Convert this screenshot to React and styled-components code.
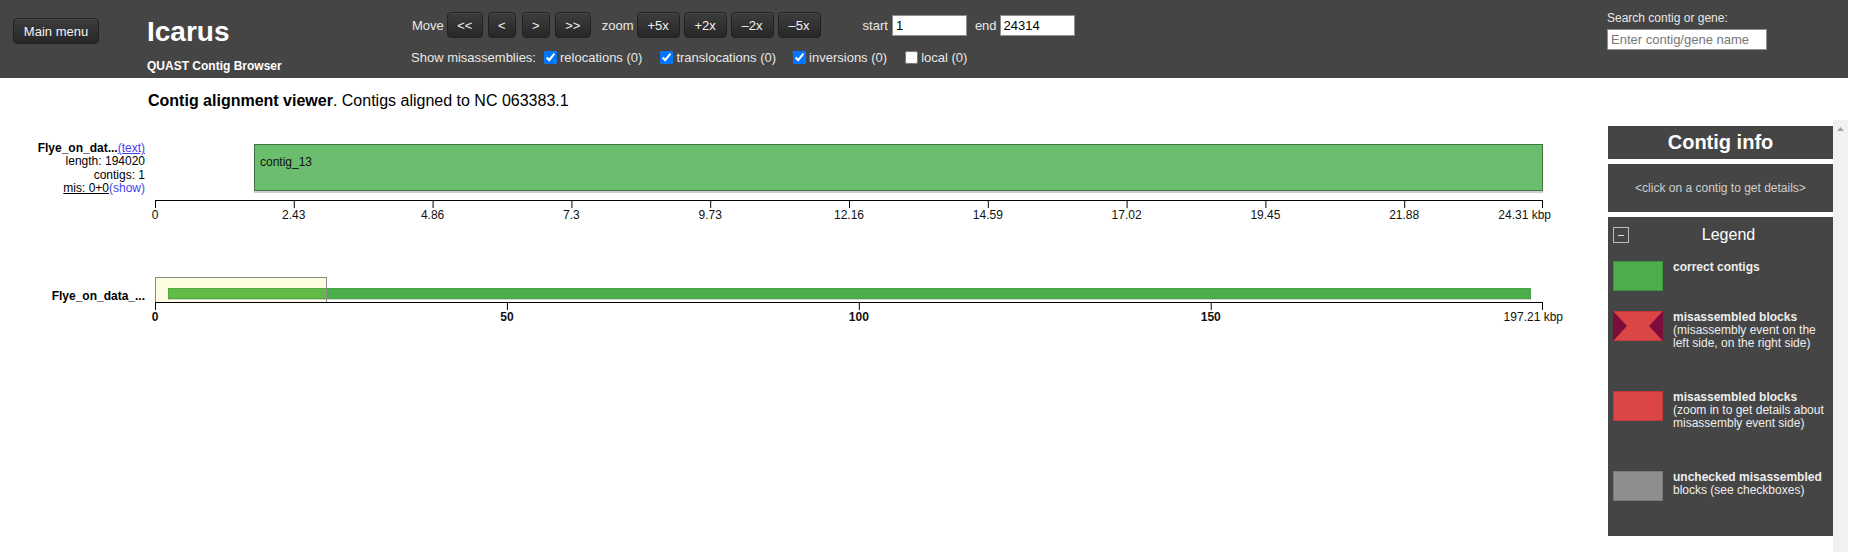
import React from 'react';
import styled, { createGlobalStyle } from 'styled-components';

const GlobalStyle = createGlobalStyle`
  html, body { margin: 0; padding: 0; overflow: hidden; background: #fff; }
  body { font-family: "Liberation Sans", Arial, sans-serif; color: #000; }
`;

const Page = styled.div`
  width: 1848px;
  height: 552px;
  display: flex;
  flex-direction: column;
`;

const Header = styled.header`
  height: 78px;
  flex-shrink: 0;
  background: #454545;
  color: #e8e8e8;
  display: flex;
  align-items: flex-start;
`;

const MenuCol = styled.div`
  width: 147px;
  padding: 18px 0 0 13px;
  box-sizing: border-box;
`;

const DarkButton = styled.button`
  height: 26px;
  width: ${p => (p.$w ? p.$w + 'px' : 'auto')};
  padding: 0 ${p => (p.$w ? 0 : 10)}px;
  margin-left: ${p => p.$ml || 0}px;
  font: 13px "Liberation Sans", Arial, sans-serif;
  color: #f2f2f2;
  background: linear-gradient(#3d3d3d, #272727);
  border: 1px solid #222;
  border-radius: 4px;
  box-shadow: inset 0 1px 0 rgba(255, 255, 255, 0.07);
  cursor: pointer;
`;

const BrandCol = styled.div`
  width: 264px;
  padding-top: 16px;
`;

const BrandTitle = styled.div`
  font-size: 28px;
  font-weight: bold;
  line-height: 32px;
  color: #fff;
`;

const BrandSub = styled.div`
  margin-top: 11px;
  font-size: 12px;
  font-weight: bold;
  line-height: 14px;
  color: #fff;
`;

const ControlsCol = styled.div`
  flex: 1;
  padding-top: 12px;
`;

const ControlRow = styled.div`
  display: flex;
  align-items: center;
  height: ${p => p.$h || 26}px;
  margin-top: ${p => p.$mt || 0}px;
  font-size: 13px;
`;

const CtrlLabel = styled.span`
  margin-left: ${p => p.$ml || 0}px;
  margin-right: ${p => p.$mr || 0}px;
  white-space: nowrap;
`;

const TextInput = styled.input`
  box-sizing: border-box;
  width: ${p => p.$w}px;
  height: 21px;
  padding: 0 3px;
  border: 1px solid #8f8f8f;
  background: #fff;
  font: 13px "Liberation Sans", Arial, sans-serif;
  color: #000;
  &::placeholder { color: #777; }
`;

const CheckItem = styled.label`
  display: flex;
  align-items: center;
  margin-left: ${p => p.$ml}px;
  white-space: nowrap;
  input {
    width: 13px;
    height: 13px;
    margin: 0 3px 0 0;
  }
`;

const SearchCol = styled.div`
  width: 241px;
  padding-top: 11px;
  font-size: 12px;
`;

const SearchLabel = styled.div`
  line-height: 14px;
  margin-bottom: 4px;
`;

const Main = styled.div`
  flex: 1;
  display: flex;
  align-items: flex-start;
`;

const LeftPane = styled.div`
  width: 1608px;
`;

const ViewerTitle = styled.div`
  padding: 14px 0 0 148px;
  font-size: 16px;
  line-height: 18px;
  b { font-weight: bold; }
`;

const TrackRow = styled.div`
  display: flex;
  align-items: flex-start;
  margin-top: ${p => p.$mt}px;
`;

const TrackLabel = styled.div`
  width: 145px;
  padding-top: ${p => p.$pt || 0}px;
  text-align: right;
  font-size: 12px;
  line-height: ${p => p.$lh || 13.33}px;
  white-space: nowrap;
`;

const Link = styled.span`
  color: #4343ee;
  text-decoration: ${p => (p.$u ? 'underline' : 'none')};
`;

const Under = styled.span`
  text-decoration: underline;
`;

const Chart = styled.svg`
  display: block;
  margin-left: 10px;
  overflow: visible;
  font-family: "Liberation Sans", Arial, sans-serif;
  font-size: 12px;
`;

const Sidebar = styled.aside`
  width: 240px;
  height: 432px;
  margin-top: 42px;
  display: flex;
`;

const Panel = styled.div`
  width: 225px;
  padding-top: 6px;
  color: #eee;
`;

const InfoTitle = styled.div`
  height: 33px;
  background: #454545;
  display: flex;
  align-items: center;
  justify-content: center;
  font-size: 20px;
  font-weight: bold;
  color: #fff;
`;

const InfoBox = styled.div`
  height: 48px;
  margin-top: 5px;
  background: #454545;
  display: flex;
  align-items: center;
  justify-content: center;
  font-size: 12px;
  color: #cfcfcf;
`;

const Legend = styled.div`
  height: 319px;
  margin-top: 5px;
  box-sizing: border-box;
  padding: 10px 5px 0 5px;
  background: #454545;
`;

const LegendHead = styled.div`
  display: flex;
  align-items: center;
  height: 16px;
`;

const MinusBox = styled.div`
  width: 16px;
  height: 16px;
  box-sizing: border-box;
  border: 1px solid #bbb;
  display: flex;
  align-items: center;
  justify-content: center;
  &::after {
    content: '';
    width: 6px;
    height: 1px;
    background: #ddd;
  }
`;

const LegendTitle = styled.div`
  flex: 1;
  text-align: center;
  font-size: 16px;
  color: #fff;
`;

const LegendList = styled.div`
  margin-top: 18px;
`;

const LegendItem = styled.div`
  display: flex;
  align-items: flex-start;
  height: ${p => p.$h}px;
`;

const Swatch = styled.div`
  flex-shrink: 0;
  width: 50px;
  height: 30px;
  box-sizing: border-box;
  background: ${p => p.$bg};
  border: 1px solid ${p => p.$bd};
`;

const LegendText = styled.div`
  margin-left: 10px;
  font-size: 12px;
  line-height: 13px;
  color: #eee;
  b { font-weight: bold; }
`;

const ScrollTrack = styled.div`
  width: 15px;
  background: #f1f1f1;
  display: flex;
  justify-content: center;
  padding-top: 7px;
  box-sizing: border-box;
`;

const TOP_W = 1388;
const topTicks = ['0', '2.43', '4.86', '7.3', '9.73', '12.16', '14.59', '17.02', '19.45', '21.88'];
const bottomTicks = [0, 50, 100, 150];
const PX_PER_KBP = TOP_W / 197.21;

function TopChart() {
  const step = TOP_W / 10;
  return (
    <Chart width="1420" height="85">
      <rect x="99" y="50" width="1289" height="2" fill="#cfcfcf" />
      <rect x="99.5" y="3.5" width="1288" height="46" fill="#6bbe6e" stroke="#3f7440" />
      <text x="105" y="24.5" fill="#111">contig_13</text>
      <line x1="0" y1="59.5" x2={TOP_W} y2="59.5" stroke="#000" />
      {topTicks.map((t, i) => (
        <g key={t}>
          <line x1={i * step + 0.5} y1="59" x2={i * step + 0.5} y2="67" stroke="#000" />
          <text x={i * step} y="78" textAnchor="middle" fill="#111">{t}</text>
        </g>
      ))}
      <line x1={TOP_W - 0.5} y1="59" x2={TOP_W - 0.5} y2="67" stroke="#000" />
      <text x="1396" y="78" textAnchor="end" fill="#111">24.31 kbp</text>
    </Chart>
  );
}

function BottomChart() {
  return (
    <Chart width="1420" height="60">
      <rect x="0.5" y="8.5" width="171" height="25" fill="#fefde1" />
      <rect x="13" y="30" width="1363" height="1" fill="#d4d4d4" />
      <rect x="13" y="19" width="1363" height="11" fill="#4cad4b" />
      <rect x="13" y="19" width="158" height="11" fill="#63ba45" />
      <rect x="13.5" y="19.5" width="1362" height="10" fill="none" stroke="#45a045" strokeOpacity="0.6" />
      <rect x="0.5" y="8.5" width="171" height="25" fill="none" stroke="#8a8a8a" />
      <line x1="0" y1="33.5" x2={TOP_W} y2="33.5" stroke="#000" />
      {bottomTicks.map(t => (
        <g key={t}>
          <line x1={t * PX_PER_KBP + 0.5} y1="33" x2={t * PX_PER_KBP + 0.5} y2="41" stroke="#000" />
          <text x={t * PX_PER_KBP} y="52" textAnchor="middle" fontWeight="bold" fill="#111">{t}</text>
        </g>
      ))}
      <line x1={TOP_W - 0.5} y1="33" x2={TOP_W - 0.5} y2="41" stroke="#000" />
      <text x="1408" y="52" textAnchor="end" fill="#111">197.21 kbp</text>
    </Chart>
  );
}

function HourglassSwatch() {
  return (
    <svg width="50" height="30" style={{ flexShrink: 0 }}>
      <rect x="0.5" y="0.5" width="49" height="29" fill="#dc4545" stroke="#c13a3a" />
      <polygon points="0,0 14,15 0,30" fill="#7a0d3b" />
      <polygon points="50,0 36,15 50,30" fill="#7a0d3b" />
    </svg>
  );
}

export default function App() {
  return (
    <Page>
      <GlobalStyle />
      <Header>
        <MenuCol>
          <DarkButton $w={86}>Main menu</DarkButton>
        </MenuCol>
        <BrandCol>
          <BrandTitle>Icarus</BrandTitle>
          <BrandSub>QUAST Contig Browser</BrandSub>
        </BrandCol>
        <ControlsCol>
          <ControlRow>
            <CtrlLabel $ml={1} $mr={3}>Move</CtrlLabel>
            <DarkButton $w={36}>&lt;&lt;</DarkButton>
            <DarkButton $w={28} $ml={5}>&lt;</DarkButton>
            <DarkButton $w={28} $ml={6}>&gt;</DarkButton>
            <DarkButton $w={36} $ml={5}>&gt;&gt;</DarkButton>
            <CtrlLabel $ml={11} $mr={3}>zoom</CtrlLabel>
            <DarkButton $w={43}>+5x</DarkButton>
            <DarkButton $w={43} $ml={4}>+2x</DarkButton>
            <DarkButton $w={43} $ml={4}>–2x</DarkButton>
            <DarkButton $w={43} $ml={4}>–5x</DarkButton>
            <CtrlLabel $ml={42} $mr={4}>start</CtrlLabel>
            <TextInput $w={75} defaultValue="1" />
            <CtrlLabel $ml={8} $mr={3}>end</CtrlLabel>
            <TextInput $w={75} defaultValue="24314" />
          </ControlRow>
          <ControlRow $h={16} $mt={11}>
            <CtrlLabel>Show misassemblies:</CtrlLabel>
            <CheckItem $ml={8}><input type="checkbox" defaultChecked />relocations (0)</CheckItem>
            <CheckItem $ml={18}><input type="checkbox" defaultChecked />translocations (0)</CheckItem>
            <CheckItem $ml={17}><input type="checkbox" defaultChecked />inversions (0)</CheckItem>
            <CheckItem $ml={18}><input type="checkbox" />local (0)</CheckItem>
          </ControlRow>
        </ControlsCol>
        <SearchCol>
          <SearchLabel>Search contig or gene:</SearchLabel>
          <TextInput $w={160} placeholder="Enter contig/gene name" />
        </SearchCol>
      </Header>

      <Main>
        <LeftPane>
          <ViewerTitle>
            <b>Contig alignment viewer</b>. Contigs aligned to NC 063383.1
          </ViewerTitle>

          <TrackRow $mt={31}>
            <TrackLabel $pt={1}>
              <div><b>Flye_on_dat...</b><Link $u>(text)</Link></div>
              <div>length: 194020</div>
              <div>contigs: 1</div>
              <div><Under>mis: 0+0</Under><Link>(show)</Link></div>
            </TrackLabel>
            <TopChart />
          </TrackRow>

          <TrackRow $mt={43}>
            <TrackLabel $pt={20} $lh={14}>
              <b>Flye_on_data_...</b>
            </TrackLabel>
            <BottomChart />
          </TrackRow>
        </LeftPane>

        <Sidebar>
          <Panel>
            <InfoTitle>Contig info</InfoTitle>
            <InfoBox>&lt;click on a contig to get details&gt;</InfoBox>
            <Legend>
              <LegendHead>
                <MinusBox />
                <LegendTitle>Legend</LegendTitle>
              </LegendHead>
              <LegendList>
                <LegendItem $h={50}>
                  <Swatch $bg="#4cad4c" $bd="#3e933e" />
                  <LegendText><b>correct contigs</b></LegendText>
                </LegendItem>
                <LegendItem $h={80}>
                  <HourglassSwatch />
                  <LegendText>
                    <b>misassembled blocks</b><br />
                    (misassembly event on the left side, on the right side)
                  </LegendText>
                </LegendItem>
                <LegendItem $h={80}>
                  <Swatch $bg="#dc4545" $bd="#c13a3a" />
                  <LegendText>
                    <b>misassembled blocks</b><br />
                    (zoom in to get details about misassembly event side)
                  </LegendText>
                </LegendItem>
                <LegendItem $h={65}>
                  <Swatch $bg="#8e8e8e" $bd="#7a7a7a" />
                  <LegendText>
                    <b>unchecked misassembled</b> blocks (see checkboxes)
                  </LegendText>
                </LegendItem>
              </LegendList>
            </Legend>
          </Panel>
          <ScrollTrack>
            <svg width="7" height="4"><polygon points="0,4 3.5,0 7,4" fill="#a3a3a3" /></svg>
          </ScrollTrack>
        </Sidebar>
      </Main>
    </Page>
  );
}
